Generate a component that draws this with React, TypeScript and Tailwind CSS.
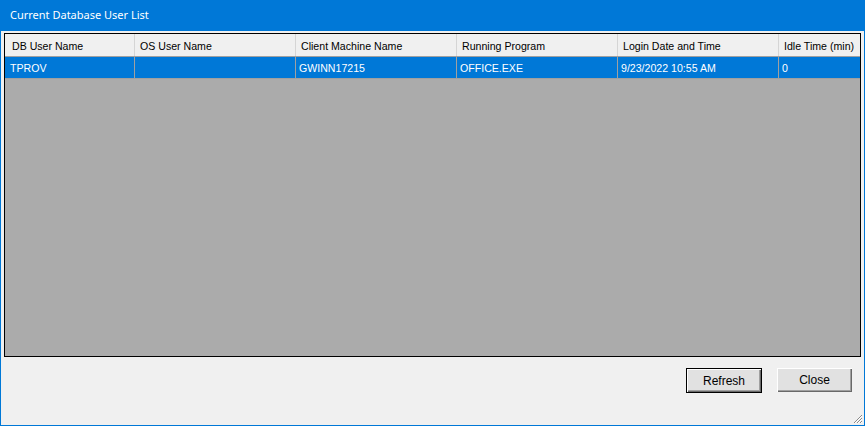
import React from "react";

const cols = [
  { title: "DB User Name", w: "w-[130px]", value: "TPROV" },
  { title: "OS User Name", w: "w-[161px]", value: "" },
  { title: "Client Machine Name", w: "w-[161px]", value: "GWINN17215" },
  { title: "Running Program", w: "w-[161px]", value: "OFFICE.EXE" },
  { title: "Login Date and Time", w: "w-[161px]", value: "9/23/2022 10:55 AM" },
  { title: "Idle Time (min)", w: "flex-1", value: "0" },
];

function Grip() {
  return (
    <svg width="12" height="12" viewBox="0 0 12 12" className="absolute right-[1px] bottom-[1px]">
      <path d="M11 3 L3 11 M11 6 L6 11 M11 9 L9 11" stroke="#8a8a8a" strokeWidth="1" />
      <path d="M11 4 L4 11 M11 7 L7 11 M11 10 L10 11" stroke="#ffffff" strokeWidth="1" />
    </svg>
  );
}

export default function App() {
  return (
    <div className="w-[865px] h-[426px] flex flex-col bg-[#0078d7] font-['Liberation_Sans',Arial,sans-serif] text-[10.6px] text-black select-none">
      {/* Title bar */}
      <div className="h-[31px] flex items-center px-[10px] text-white text-[11px] font-['Noto_Sans',sans-serif] shrink-0">
        Current Database User List
      </div>

      {/* Client area */}
      <div className="relative flex-1 mx-[1px] mb-[1px] bg-[#f0f0f0] flex flex-col pl-[3px] pr-[3px] pt-[2px]">
        <div className="h-[324px] border border-black bg-[#ababab] flex flex-col">
          {/* header */}
          <div className="h-[23px] flex bg-[#f0f0f0] border-b border-[#a0a0a0] shrink-0">
            {cols.map((c, i) => (
              <div
                key={c.title}
                className={`${c.w} ${i < cols.length - 1 ? "border-r border-[#d5d5d5]" : ""} flex items-center pt-[3px] ${i === 0 ? "pl-[7px]" : "pl-[5px]"} whitespace-nowrap overflow-hidden`}
              >
                {c.title}
              </div>
            ))}
          </div>
          {/* selected row */}
          <div className="h-[22px] flex bg-[#0078d7] text-white border-b border-[#a0a0a0] shrink-0">
            {cols.map((c, i) => (
              <div
                key={c.title}
                className={`${c.w} ${i < cols.length - 1 ? "border-r border-[#a0a0a0]" : ""} flex items-center pt-[3px] ${i === 0 ? "pl-[5px]" : "pl-[3px]"} whitespace-nowrap overflow-hidden`}
              >
                {c.value}
              </div>
            ))}
          </div>
        </div>

        <div className="flex justify-end gap-[15px] pr-[9px] pt-[11px]">
          <button className="w-[76px] h-[25px] border border-black bg-[#e1e1e1] shadow-[inset_1px_1px_0_#ffffff,inset_-1px_-1px_0_#696969,inset_-2px_-2px_0_#a0a0a0] flex items-center justify-center text-[12px]">
            Refresh
          </button>
          <button className="w-[75px] h-[24px] bg-[#e1e1e1] shadow-[inset_1px_1px_0_#ffffff,inset_-1px_-1px_0_#696969,inset_-2px_-2px_0_#a0a0a0] flex items-center justify-center text-[12px]">
            Close
          </button>
        </div>
        <Grip />
      </div>
    </div>
  );
}
